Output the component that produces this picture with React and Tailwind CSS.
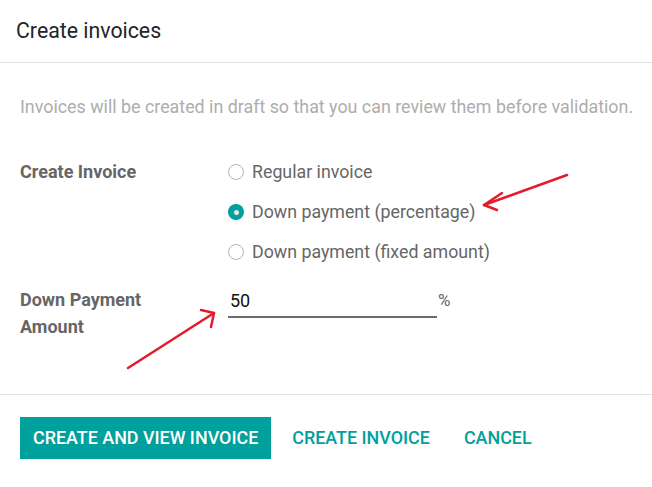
export default function App() {
  const radios = [
    { label: "Regular invoice", checked: false },
    { label: "Down payment (percentage)", checked: true },
    { label: "Down payment (fixed amount)", checked: false },
  ];
  return (
    <div
      className="relative w-[652px] h-[487px] bg-white overflow-hidden"
      style={{ fontFamily: "Roboto, 'Noto Sans', sans-serif" }}
    >
      <div className="h-[63px] flex items-center px-4 border-b border-[#dee2e6]">
        <span className="text-[21.3px] text-[#212529] leading-none">Create invoices</span>
      </div>
      <div className="px-5">
        <p className="mt-8 text-[17.85px] leading-6 text-[#adadad] whitespace-nowrap">
          Invoices will be created in draft so that you can review them before validation.
        </p>
        <div className="mt-[33px] flex">
          <div className="w-[208px] text-[18px] font-bold leading-[40px] text-[#666666]">
            Create Invoice
          </div>
          <div className="flex flex-col">
            {radios.map((r) => (
              <div key={r.label} className="h-[40px] flex items-center">
                {r.checked ? (
                  <span className="w-4 h-4 rounded-full bg-[#00a09d] flex items-center justify-center">
                    <span className="w-[5px] h-[5px] rounded-full bg-[#e6e6e6]" />
                  </span>
                ) : (
                  <span className="w-4 h-4 rounded-full border border-[#b5b5b5] bg-white" />
                )}
                <span className="ml-2 text-[17.8px] text-[#666666]">{r.label}</span>
              </div>
            ))}
          </div>
        </div>
        <div className="mt-[14px] flex">
          <div className="w-[208px] text-[18px] font-bold leading-[27px] text-[#666666]">
            Down Payment
            <br />
            Amount
          </div>
          <div className="flex items-start">
            <div className="w-[209px] h-[32px] border-b-2 border-[#6b6b6b] flex items-center pl-[2px] text-[18px] text-[#111111] leading-none">
              50
            </div>
            <span className="ml-[1px] mt-[2px] text-[17px] text-[#666666]">%</span>
          </div>
        </div>
      </div>
      <div className="absolute left-0 right-0 top-[394px] border-t border-[#dee2e6] px-5 pt-[22px] flex items-center">
        <button className="h-[42px] px-[13px] bg-[#00a09d] text-white text-[17.9px] font-medium uppercase">
          Create and view invoice
        </button>
        <button className="ml-[21px] text-[#00a09d] text-[17.9px] font-medium uppercase">
          Create invoice
        </button>
        <button className="ml-[34px] text-[#00a09d] text-[17.9px] font-medium uppercase">
          Cancel
        </button>
      </div>
      <svg className="absolute inset-0 pointer-events-none" width="652" height="487">
        <g stroke="#e31b2d" strokeWidth="2.5" fill="none" strokeLinecap="round" strokeLinejoin="round">
          <path d="M567 175 L484 205" />
          <path d="M502 193 L484 205 L497 210" />
          <path d="M128 368 L214 313" />
          <path d="M201 310 L214 313 L211 327" />
        </g>
      </svg>
    </div>
  );
}
